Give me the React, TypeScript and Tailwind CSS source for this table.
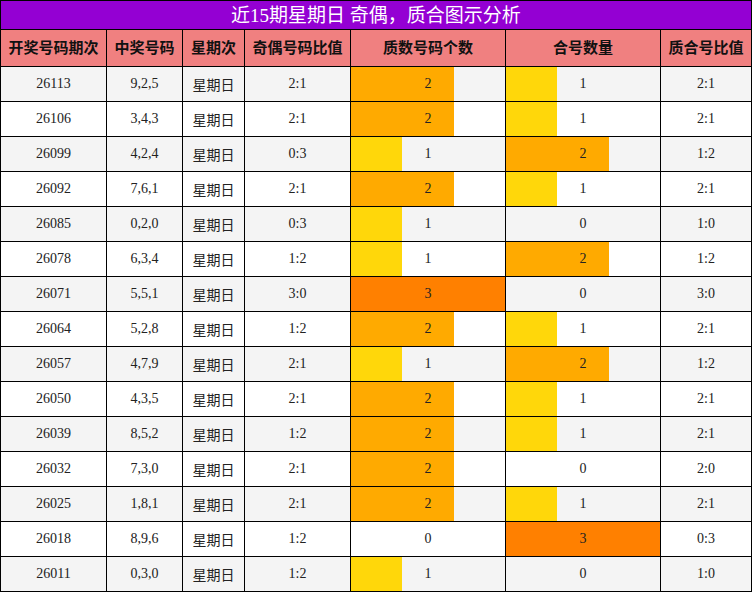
import React from "react";

type Row = [string, string, string, number, number, string];

const rows: Row[] = [
  ["26113", "9,2,5", "2:1", 2, 1, "2:1"],
  ["26106", "3,4,3", "2:1", 2, 1, "2:1"],
  ["26099", "4,2,4", "0:3", 1, 2, "1:2"],
  ["26092", "7,6,1", "2:1", 2, 1, "2:1"],
  ["26085", "0,2,0", "0:3", 1, 0, "1:0"],
  ["26078", "6,3,4", "1:2", 1, 2, "1:2"],
  ["26071", "5,5,1", "3:0", 3, 0, "3:0"],
  ["26064", "5,2,8", "1:2", 2, 1, "2:1"],
  ["26057", "4,7,9", "2:1", 1, 2, "1:2"],
  ["26050", "4,3,5", "2:1", 2, 1, "2:1"],
  ["26039", "8,5,2", "1:2", 2, 1, "2:1"],
  ["26032", "7,3,0", "2:1", 2, 0, "2:0"],
  ["26025", "1,8,1", "2:1", 2, 1, "2:1"],
  ["26018", "8,9,6", "1:2", 0, 3, "0:3"],
  ["26011", "0,3,0", "1:2", 1, 0, "1:0"],
];

const headers = ["开奖号码期次", "中奖号码", "星期次", "奇偶号码比值", "质数号码个数", "合号数量", "质合号比值"];

const barColor = (v: number) => (v === 1 ? "#FFD70A" : v === 2 ? "#FFAA00" : "#FF8000");

function BarCell({ v, bg }: { v: number; bg: string }) {
  return (
    <div className={`relative flex items-center justify-center pb-[2px] ${bg}`}>
      {v > 0 && (
        <div
          className="absolute left-0 top-0 bottom-0"
          style={{ width: `${(v / 3) * 100}%`, backgroundColor: barColor(v) }}
        />
      )}
      <span className="relative">{v}</span>
    </div>
  );
}

export default function App() {
  return (
    <div
      className="w-[752px] h-[592px] bg-black p-px grid gap-px grid-cols-[105px_75px_61px_105px_154px_154px_90px] grid-rows-[28px_36px_repeat(15,34px)] text-[14px] text-[#222]"
      style={{ fontFamily: '"Liberation Serif", "Noto Sans CJK SC", serif' }}
    >
      <div className="col-span-7 bg-[#9400D3] text-white text-[19px] flex items-center justify-center leading-none">
        近15期星期日 奇偶，质合图示分析
      </div>
      {headers.map((h) => (
        <div key={h} className="bg-[#F08080] flex items-center justify-center font-bold text-[15px] text-[#111]">
          {h}
        </div>
      ))}
      {rows.map((r, i) => {
        const bg = i % 2 === 0 ? "bg-[#f4f4f4]" : "bg-white";
        return (
          <React.Fragment key={r[0]}>
            <div className={`${bg} flex items-center justify-center pb-[2px]`}>{r[0]}</div>
            <div className={`${bg} flex items-center justify-center pb-[2px]`}>{r[1]}</div>
            <div className={`${bg} flex items-center justify-center pt-[3px]`}>星期日</div>
            <div className={`${bg} flex items-center justify-center pb-[2px]`}>{r[2]}</div>
            <BarCell v={r[3]} bg={bg} />
            <BarCell v={r[4]} bg={bg} />
            <div className={`${bg} flex items-center justify-center pb-[2px]`}>{r[5]}</div>
          </React.Fragment>
        );
      })}
    </div>
  );
}
